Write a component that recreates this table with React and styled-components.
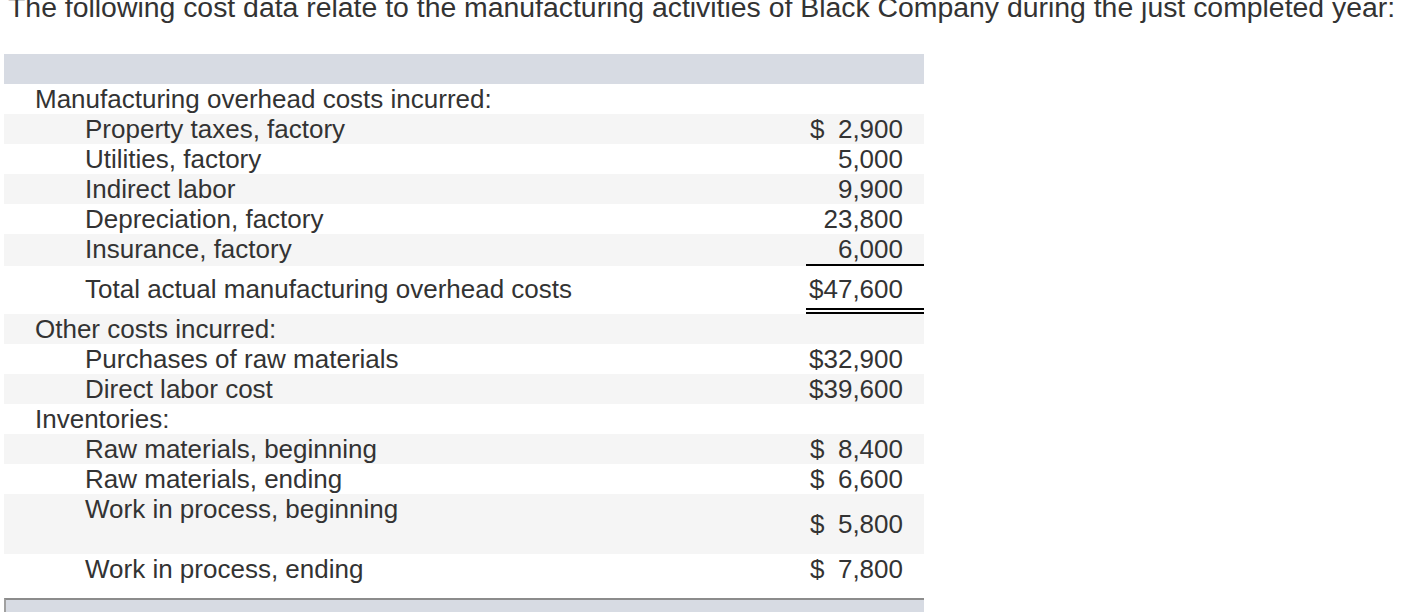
import React from "react";
import styled, { createGlobalStyle } from "styled-components";

const GlobalStyle = createGlobalStyle`
  html, body {
    margin: 0;
    padding: 0;
    background: #ffffff;
  }
  body {
    font-family: "Liberation Sans", Arial, Helvetica, sans-serif;
    color: #333333;
    overflow: hidden;
  }
`;

const Page = styled.div`
  width: 1406px;
  height: 612px;
  overflow: hidden;
`;

const Title = styled.p`
  margin: -9px 0 0 0;
  padding-left: 8px;
  font-size: 28.4px;
  line-height: 32px;
  color: #333333;
  white-space: nowrap;
`;

const Table = styled.div`
  margin: 31px 0 0 4px;
  width: 920px;
  display: flex;
  flex-direction: column;
  font-size: 26px;
  line-height: 30px;
  color: #333333;
`;

const HeaderBand = styled.div`
  height: 30px;
  background: #d7dbe3;
`;

const FooterBand = styled.div`
  height: 30px;
  background: #d7dbe3;
  border-top: 2px solid #8c8c8c;
  border-left: 2px solid #a0a0a0;
`;

const heights = {
  normal: "30px",
  total: "42px",
  tall: "60px",
  last: "44px",
};

const Row = styled.div`
  display: flex;
  align-items: stretch;
  min-height: ${(p) => heights[p.$size] || "30px"};
  background: ${(p) => (p.$shade ? "#f5f5f5" : "transparent")};
`;

const Label = styled.div`
  flex: 1;
  padding-left: ${(p) => (p.$level === 0 ? "31px" : "81px")};
  padding-top: ${(p) => (p.$size === "total" ? "8px" : "0")};
  white-space: nowrap;
`;

const ValueCell = styled.div`
  width: 118px;
  box-sizing: border-box;
  padding: ${(p) => (p.$size === "total" ? "8px 21px 4px 4px" : "0 21px 0 4px")};
  display: flex;
  justify-content: ${(p) => (p.$dollar ? "space-between" : "flex-end")};
  align-items: ${(p) => (p.$size === "tall" ? "center" : "flex-start")};
  border-bottom: ${(p) =>
    p.$rule === "single"
      ? "2px solid #000000"
      : p.$rule === "double"
      ? "6px double #000000"
      : "none"};
  white-space: nowrap;
`;

const rows = [
  { label: "Manufacturing overhead costs incurred:", level: 0 },
  { label: "Property taxes, factory", level: 1, dollar: true, value: "2,900", shade: true },
  { label: "Utilities, factory", level: 1, value: "5,000" },
  { label: "Indirect labor", level: 1, value: "9,900", shade: true },
  { label: "Depreciation, factory", level: 1, value: "23,800" },
  { label: "Insurance, factory", level: 1, value: "6,000", shade: true, rule: "single" },
  {
    label: "Total actual manufacturing overhead costs",
    level: 1,
    value: "$47,600",
    rule: "double",
    size: "total",
  },
  { label: "Other costs incurred:", level: 0, shade: true },
  { label: "Purchases of raw materials", level: 1, value: "$32,900" },
  { label: "Direct labor cost", level: 1, value: "$39,600", shade: true },
  { label: "Inventories:", level: 0 },
  { label: "Raw materials, beginning", level: 1, dollar: true, value: "8,400", shade: true },
  { label: "Raw materials, ending", level: 1, dollar: true, value: "6,600" },
  {
    label: "Work in process, beginning",
    level: 1,
    dollar: true,
    value: "5,800",
    shade: true,
    size: "tall",
  },
  { label: "Work in process, ending", level: 1, dollar: true, value: "7,800", size: "last" },
];

export default function App() {
  return (
    <Page>
      <GlobalStyle />
      <Title>
        The following cost data relate to the manufacturing activities of Black Company during the
        just completed year:
      </Title>
      <Table>
        <HeaderBand />
        {rows.map((r, i) => (
          <Row key={i} $shade={r.shade} $size={r.size || "normal"}>
            <Label $level={r.level} $size={r.size || "normal"}>
              {r.label}
            </Label>
            <ValueCell $dollar={r.dollar} $rule={r.rule} $size={r.size || "normal"}>
              {r.value !== undefined && r.dollar && <span>$</span>}
              {r.value !== undefined && <span>{r.value}</span>}
            </ValueCell>
          </Row>
        ))}
        <FooterBand />
      </Table>
    </Page>
  );
}
